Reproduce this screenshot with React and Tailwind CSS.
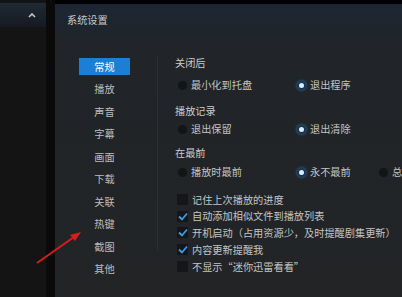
import React from 'react';

const navItems = ['常规', '播放', '声音', '字幕', '画面', '下载', '关联', '热键', '截图', '其他'];

const Radio = ({ checked, label, className = '' }) => (
  <div className={`flex items-center shrink-0 ${className}`}>
    {checked ? (
      <span className="w-[9px] h-[9px] rounded-full bg-[#1b3550] flex items-center justify-center shadow-[0_0_3px_#2a86d0]">
        <span className="w-[5px] h-[5px] rounded-full bg-[#d8eeff]" />
      </span>
    ) : (
      <span className="w-[9px] h-[9px] rounded-full bg-[#131415]" />
    )}
    <span className="ml-[4px] text-[10.2px] text-[#c4c4c4] whitespace-nowrap">{label}</span>
  </div>
);

const Check = ({ checked, label }) => (
  <div className="flex items-center h-[16.75px]">
    <span className="w-[11px] h-[11px] bg-[#151617] flex items-center justify-center shrink-0">
      {checked && (
        <svg width="10" height="9" viewBox="0 0 10 9">
          <path d="M1 4.5 L4 7.5 L9 1.5" fill="none" stroke="#3b9ce6" strokeWidth="1.8" />
        </svg>
      )}
    </span>
    <span className="ml-[4px] text-[10.2px] text-[#c4c4c4] whitespace-nowrap">{label}</span>
  </div>
);

const App = () => {
  return (
    <div
      className="relative w-[402px] h-[297px] overflow-hidden bg-black flex"
      style={{ fontFamily: '"Noto Sans CJK SC", "Noto Sans", sans-serif' }}
    >
      {/* 左侧面板 */}
      <div className="w-[46px] shrink-0 h-full bg-[#141414] flex flex-col pt-[3px]">
        <div className="h-[24px] bg-gradient-to-b from-[#1f2a36] to-[#151a20] flex justify-end items-center pr-[10px]">
          <svg width="8" height="5" viewBox="0 0 8 5">
            <path d="M1 4 L4 1 L7 4" fill="none" stroke="#c8c8c8" strokeWidth="1.6" />
          </svg>
        </div>
      </div>
      <div className="w-[9px] shrink-0 h-full bg-[#0a0a0a]" />

      {/* 设置窗口 */}
      <div className="flex-1 min-w-0 overflow-hidden h-full pt-[4px] bg-black">
        <div className="h-full bg-gradient-to-b from-[#1c2633] via-[#212428] via-[16%] to-[#222426] flex flex-col">
          <div className="h-[32px] pl-[12px] flex items-center text-[10.2px] text-[#c8c8c8]">系统设置</div>

          <div className="flex pt-[19px]">
            {/* 导航 */}
            <div className="ml-[24px] w-[51px] shrink-0 flex flex-col">
              {navItems.map((item, i) => (
                <div key={item} className="h-[22.5px] flex items-center justify-center">
                  {i === 0 ? (
                    <span className="w-full h-[17px] bg-[#1c7fd3] flex items-center justify-center text-[10.2px] text-white">
                      {item}
                    </span>
                  ) : (
                    <span className="text-[10.2px] text-[#bdbdbd]">{item}</span>
                  )}
                </div>
              ))}
            </div>

            <div className="ml-[27px] w-px shrink-0 h-[195px] bg-[#2c2e31]" />

            {/* 内容 */}
            <div className="ml-[17px] flex flex-col shrink-0">
              <div className="h-[16px] flex items-center text-[10.2px] text-[#cccccc]">关闭后</div>
              <div className="mt-[6px] h-[16px] flex">
                <Radio label="最小化到托盘" className="ml-[3px] w-[119px]" />
                <Radio checked label="退出程序" />
              </div>

              <div className="mt-[10px] h-[16px] flex items-center text-[10.2px] text-[#cccccc]">播放记录</div>
              <div className="mt-[2px] h-[16px] flex">
                <Radio label="退出保留" className="ml-[3px] w-[119px]" />
                <Radio checked label="退出清除" />
              </div>

              <div className="mt-[8px] h-[16px] flex items-center text-[10.2px] text-[#cccccc]">在最前</div>
              <div className="mt-[3px] h-[16px] flex">
                <Radio label="播放时最前" className="ml-[3px] w-[119px]" />
                <Radio checked label="永不最前" className="w-[82px]" />
                <Radio label="总在最前" />
              </div>

              <div className="mt-[11px] ml-[2px] flex flex-col">
                <Check label="记住上次播放的进度" />
                <Check checked label="自动添加相似文件到播放列表" />
                <Check checked label="开机启动（占用资源少，及时提醒剧集更新）" />
                <Check checked label="内容更新提醒我" />
                <Check label="不显示“迷你迅雷看看”" />
              </div>
            </div>
          </div>
        </div>
      </div>

      {/* 红色箭头标注 */}
      <svg className="absolute left-0 top-0 pointer-events-none" width="402" height="297">
        <line x1="37" y1="263" x2="74" y2="237" stroke="#d91c1c" strokeWidth="2" />
        <polygon points="81,232 70,235 75,241" fill="#d91c1c" />
      </svg>
    </div>
  );
};

export default App;
